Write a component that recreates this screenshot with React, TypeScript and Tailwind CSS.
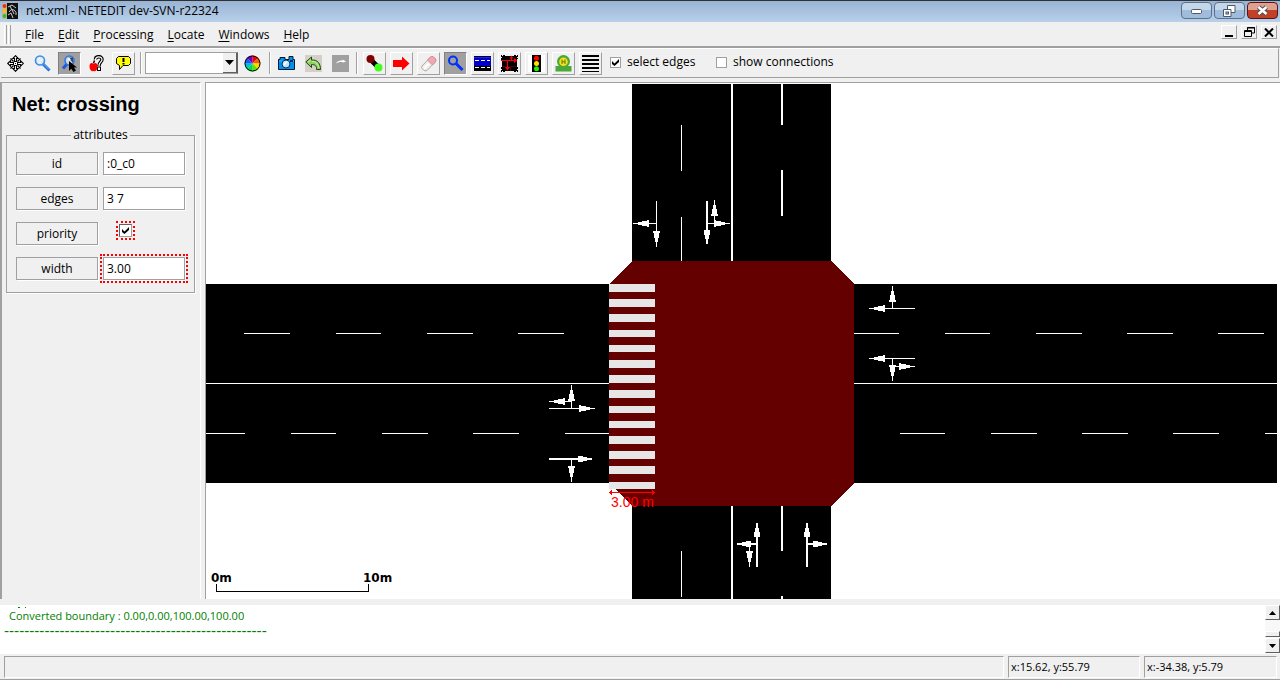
import type { ReactNode } from "react";

const menus = ["File", "Edit", "Processing", "Locate", "Windows", "Help"];

const raised = "border border-t-white border-l-white border-r-[#a0a0a0] border-b-[#a0a0a0] bg-[#f0f0f0]";
const pressed = "border border-t-[#808080] border-l-[#808080] border-r-white border-b-white bg-[#a0a0a0]";
const flat = "border border-transparent";

function Icon({ children, size = 17 }: { children: ReactNode; size?: number }) {
  return (
    <svg width={size} height={size} viewBox={`0 0 ${size} ${size}`} aria-hidden="true">
      {children}
    </svg>
  );
}

const viewTools = [
  {
    label: "Recenter view",
    style: flat,
    icon: (
      <Icon>
        <path d="M3.500 3.500 L6.500 6.500 M13.500 3.500 L10.500 6.500 M3.500 13.500 L6.500 10.500 M13.500 13.500 L10.500 10.500" stroke="#000" strokeWidth="1.200" />
        <g fill="#fff" stroke="#000" strokeWidth="1.100">
          <path d="M8.500 .7 L11.200 3.500 H9.500 V6.500 H7.500 V3.500 H5.800 Z" />
          <path d="M8.500 16.300 L11.200 13.500 H9.500 V10.500 H7.500 V13.500 H5.800 Z" />
          <path d="M.7 8.500 L3.500 5.800 V7.500 H6.500 V9.500 H3.500 V11.200 Z" />
          <path d="M16.300 8.500 L13.500 5.800 V7.500 H10.500 V9.500 H13.500 V11.200 Z" />
        </g>
        <rect x="7" y="7" width="3" height="3" fill="#fff" />
        <rect x="8" y="8" width="1" height="1" fill="#000" />
      </Icon>
    ),
  },
  {
    label: "Edit viewport",
    style: flat,
    icon: (
      <Icon>
        <path d="M9 9 L15.500 15.500" stroke="#2070d8" strokeWidth="3" />
        <path d="M9.500 9 L15 14.500" stroke="#70b8f8" />
        <circle cx="6" cy="5.500" r="4.500" fill="#dcecf8" stroke="#3c8ce8" strokeWidth="1.600" />
        <path d="M4 5 L6 3 M5 7.500 L8.500 4" stroke="#fff" />
      </Icon>
    ),
  },
  {
    label: "Inspect objects",
    style: pressed,
    icon: (
      <Icon>
        <path d="M6 9 L2 13.500" stroke="#1c58e0" strokeWidth="3" />
        <circle cx="8.500" cy="5.500" r="4.500" fill="#d0d8e0" stroke="#2c78e8" strokeWidth="1.600" />
        <path d="M7.500 2.500 H12 V8 Z" fill="#404850" />
        <path d="M8 6 V16 L10.200 13.800 L12.500 17 L15 15.500 L13 12.500 H16 Z" fill="#000" />
        <path d="M7.500 3.500 L9 5" stroke="#fff" strokeWidth="2" />
      </Icon>
    ),
  },
  {
    label: "Locate object",
    style: flat,
    icon: (
      <Icon>
        <path d="M7.500 4.500 C7.500 .8 14 .8 14 4.300 C14 7 11 7 11 11" fill="none" stroke="#000" strokeWidth="3.500" />
        <path d="M7.500 5 C7.500 1 14 1 14 4.500 C14 7 11 7 11 11" fill="none" stroke="#fff" strokeWidth="1.200" />
        <rect x="9.500" y="12" width="3" height="3.500" fill="#fff" stroke="#000" />
        <path d="M5.500 8 L6.500 5.500" stroke="#000" strokeWidth="1.500" />
        <path d="M5.500 8.500 C3 7 1.500 8.500 1.500 11.500 C1.500 15 4 17 5.800 16 C8 17 9.500 14.500 9.500 11.500 C9.500 8.500 8 7 5.500 8.500 Z" fill="#f00" />
      </Icon>
    ),
  },
  {
    label: "Toggle tooltips",
    style: raised,
    icon: (
      <Icon>
        <path d="M3.500 1.500 H13.500 L15.500 3.500 V8.500 L13.500 10.500 H8 L4.500 14.500 V10.500 L1.500 8.500 V3.500 Z" fill="#ff0" stroke="#000" />
        <path d="M8.500 3 V7 M8.500 8 V9.500" stroke="#000" strokeWidth="2" />
      </Icon>
    ),
  },
];

const historyTools = [
  {
    label: "Make snapshot",
    icon: (
      <Icon>
        <path d="M2 2.500 H7 V4.500 H11 V1.500 H15 V4.500 H16.500 V14.500 H.5 V4.500 H2 Z" fill="#0090f0" stroke="#001830" />
        <path d="M1 6 H16" stroke="#40b8ff" />
        <circle cx="8" cy="9" r="4" fill="#b8e4ff" stroke="#003060" />
        <path d="M6 10 L9 6.500" stroke="#fff" strokeWidth="1.500" />
        <rect x="12" y="5" width="3" height="2" fill="#002850" />
      </Icon>
    ),
  },
  {
    label: "Undo",
    icon: (
      <Icon>
        <rect width="17" height="17" fill="#d4d0c8" />
        <path d="M.8 7 L6.500 2 V5 C13 4.500 15.500 9 15.500 14.500 H11.500 C12 11 10 9.500 6.500 9.500 V12.500 Z" fill="#90d060" stroke="#1c4814" />
        <path d="M3 7 L6 4.500 M7 6.500 C11 6.500 13 8.500 14 13" fill="none" stroke="#d0f0b0" />
      </Icon>
    ),
  },
  {
    label: "Redo",
    icon: (
      <Icon>
        <rect width="17" height="17" fill="#a0a0a0" />
        <path d="M4 8.500 C5 6 8 5 10.500 5.500 V4.500 L14 6.500 L11.500 7.500 C8 6.500 6 7.500 4 8.500 Z" fill="#fff" />
      </Icon>
    ),
  },
];

const editModes = [
  {
    label: "Create edge",
    style: raised,
    icon: (
      <Icon>
        <path d="M5 5 L12 12" stroke="#000" strokeWidth="5" />
        <circle cx="4.500" cy="4" r="4" fill="#800000" />
        <circle cx="12.500" cy="12.500" r="4" fill="#40ff20" />
      </Icon>
    ),
  },
  {
    label: "Move",
    style: raised,
    icon: (
      <Icon>
        <path d="M0 5 H9 V1.500 L16.500 8.500 L9 15.500 V12 H0 Z" fill="#f00" />
      </Icon>
    ),
  },
  {
    label: "Delete",
    style: raised,
    icon: (
      <Icon>
        <path d="M2 11 L10.500 2 Q12 .5 13.500 2 L15.500 4 Q16.500 5.500 15.300 7 L7 15.500 Q5 16.500 3.500 15 L2 13.500 Q1 12.500 2 11 Z" fill="#f0ece8" stroke="#b0a8a8" />
        <path d="M7.500 5 L10.500 2 Q12 .5 13.500 2 L15.500 4 Q16.500 5.500 15.300 7 L12.500 10 Z" fill="#f0a8b4" stroke="#d88c98" />
        <path d="M4 13.500 L9 8.500" stroke="#fff" strokeWidth="2" />
      </Icon>
    ),
  },
  {
    label: "Inspect",
    style: pressed,
    icon: (
      <Icon>
        <circle cx="6" cy="5.500" r="4" fill="none" stroke="#0030ff" strokeWidth="2" />
        <path d="M9 8.500 L15.500 15" stroke="#0030ff" strokeWidth="3" />
      </Icon>
    ),
  },
  {
    label: "Select",
    style: raised,
    icon: (
      <Icon>
        <g shapeRendering="crispEdges">
          <rect y="1" width="17" height="15" fill="#000" />
          <rect y="2" width="17" height="9" fill="#0000c8" />
          <rect y="2" width="17" height="1" fill="#2020ff" />
          <path d="M1 5.500 H5 M7 5.500 H11 M13 5.500 H16 M1 12.500 H5 M7 12.500 H11 M13 12.500 H16" stroke="#fff" />
        </g>
      </Icon>
    ),
  },
  {
    label: "Connect",
    style: raised,
    icon: (
      <Icon>
        <g shapeRendering="crispEdges">
          <rect x="1" y="1" width="15" height="15" fill="#000" />
          <path d="M0 5 V.5 H4 M13 .5 H16.500 V4 M0 12 V16.500 H4 M13 16.500 H16.500 V12" fill="none" stroke="#000" strokeDasharray="2 1" />
          <path d="M0 5.500 H15 M6.500 5 V14 M10.500 5 V2" stroke="#f00" fill="none" />
          <path d="M1 11.500 H4 M9 11.500 H16 M9.500 12 V16" stroke="#580000" />
        </g>
        <path d="M13 3 L16.500 5.500 L13 8 Z M4 12 H9 L6.500 15.500 Z M8.500 3.500 L10.500 .5 L12.500 3.500 Z" fill="#f00" />
      </Icon>
    ),
  },
  {
    label: "Traffic lights",
    style: raised,
    icon: (
      <Icon>
        <rect width="17" height="17" fill="#fff" />
        <rect x="4" width="9" height="17" fill="#000" />
        <circle cx="8.500" cy="3.200" r="2.500" fill="#f00" />
        <circle cx="8.500" cy="8.500" r="2.500" fill="#ffe000" />
        <circle cx="8.500" cy="13.800" r="2.500" fill="#20f000" />
      </Icon>
    ),
  },
  {
    label: "Additionals",
    style: raised,
    icon: (
      <Icon>
        <path d="M.5 11 H4 Q2 9 2 6.500 A6.500 6.500 0 0 1 15 6.500 Q15 9 13 11 H16.500 V16.500 H.5 Z" fill="#48a838" />
        <circle cx="8.500" cy="6.800" r="4.300" fill="#f8e020" />
        <path d="M7 4.500 V9 M10 4.500 V9 M7 6.800 H10" stroke="#58780c" />
      </Icon>
    ),
  },
  {
    label: "Crossings",
    style: raised,
    icon: (
      <Icon>
        <path d="M0 1 H17 M0 5 H17 M0 9 H17 M0 13 H17 M0 16.500 H17" stroke="#000" strokeWidth="2" shapeRendering="crispEdges" />
      </Icon>
    ),
  },
];

const wheel = ["#f80000", "#f06000", "#f8d800", "#60e000", "#00d848", "#00c0d0", "#1060f8", "#7000c0"];

function ColorWheel() {
  return (
    <Icon>
      {wheel.map((color, i) => {
        const a = (i * Math.PI) / 4 - Math.PI / 2;
        const b = a + Math.PI / 4;
        return (
          <path
            key={color}
            fill={color}
            d={`M8.500 8.500 L${8.5 + 8 * Math.cos(a)} ${8.5 + 8 * Math.sin(a)} A8 8 0 0 1 ${8.5 + 8 * Math.cos(b)} ${8.5 + 8 * Math.sin(b)} Z`}
          />
        );
      })}
      <circle cx="8.500" cy="8.500" r="7.500" fill="none" stroke="#000" />
    </Icon>
  );
}

function ToolButton({ label, style, children }: { label: string; style: string; children: ReactNode }) {
  return (
    <button type="button" aria-label={label} className={`flex h-[23px] w-[23px] shrink-0 items-center justify-center ${style}`}>
      {children}
    </button>
  );
}

function Separator() {
  return <div className="h-[22px] w-[2px] shrink-0 border-l border-l-[#a0a0a0] bg-white" />;
}

function Checkbox({ id, checked, className = "" }: { id: string; checked: boolean; className?: string }) {
  return (
    <span className="grid shrink-0">
      <input
        id={id}
        type="checkbox"
        defaultChecked={checked}
        className={`peer col-start-1 row-start-1 appearance-none border border-[#a0a0a0] bg-white ${className}`}
      />
      <svg
        className="pointer-events-none invisible col-start-1 row-start-1 place-self-center peer-checked:visible"
        width="7"
        height="7"
        viewBox="0 0 7 7"
      >
        <path d="M0 2 L2.500 4.500 L7 0 V3 L2.500 7 L0 5 Z" fill="#000" />
      </svg>
    </span>
  );
}

function TitleBar() {
  const frame = "flex h-[17px] w-[31px] items-center justify-center rounded-sm border border-[#5c708c]";
  return (
    <header className="flex h-[22px] items-center border-t border-[#303030] bg-linear-to-b from-[#98b4d4] to-[#b8d0ea] pr-[2px] pb-[2px]">
      <svg className="ml-[2px]" width="16" height="16" viewBox="0 0 16 16" aria-hidden="true">
        <rect x="5" width="11" height="16" fill="#101010" />
        <path d="M6 4 L10 2 L14 5 M7 9 Q9 5 12 7 T14 12 M6 12 L9 10 L11 15 M8 3 L12 11" fill="none" stroke="#c8c8c8" />
        <rect width="5" height="16" fill="#b8b8a8" />
        <circle cx="2.500" cy="3" r="2" fill="#f03010" />
        <circle cx="2.500" cy="8" r="2" fill="#f8c000" />
        <circle cx="2.500" cy="13" r="2" fill="#40b820" />
      </svg>
      <h1 className="ml-2 flex-1 text-[12px] leading-[18px]">net.xml - NETEDIT dev-SVN-r22324</h1>
      <div className="flex gap-[2px]">
        <button type="button" aria-label="Minimize" className={`${frame} bg-linear-to-b from-[#c4d6ea] from-50% to-[#a0bcdc] to-50%`}>
          <svg width="12" height="6" viewBox="0 0 12 6">
            <rect x=".5" y="1.500" width="10" height="4" rx="1" fill="#fff" stroke="#505868" />
          </svg>
        </button>
        <button type="button" aria-label="Restore" className={`${frame} bg-linear-to-b from-[#c4d6ea] from-50% to-[#a0bcdc] to-50%`}>
          <svg width="13" height="12" viewBox="0 0 13 12">
            <path d="M4.500 .5 H12 V7.500 H4.500 Z" fill="#fff" stroke="#505868" />
            <path d="M.5 4.500 H8 V11.500 H.5 Z" fill="#fff" stroke="#505868" />
            <rect x="3" y="7" width="2.500" height="2" fill="#a0bcdc" stroke="#505868" />
          </svg>
        </button>
        <button
          type="button"
          aria-label="Close"
          className="flex h-[17px] w-[31px] items-center justify-center rounded-sm border border-[#581418] bg-linear-to-b from-[#e0a090] from-50% to-[#c04028] to-50%"
        >
          <svg width="13" height="11" viewBox="0 0 13 11">
            <path d="M2.500 2 L10.500 9 M10.500 2 L2.500 9" stroke="#505058" strokeWidth="4.500" />
            <path d="M2.500 2 L10.500 9 M10.500 2 L2.500 9" stroke="#fff" strokeWidth="2.500" />
          </svg>
        </button>
      </div>
    </header>
  );
}

function MenuBar() {
  const box = `flex h-[14px] w-4 items-center justify-center ${raised}`;
  return (
    <nav className="flex h-[26px] items-center border-b-2 border-[#a0a0a0] pr-[3px] pl-1">
      <div className="flex gap-[1px] pr-[7px]">
        <div className="h-[19px] w-[3px] border-r border-l border-r-[#a0a0a0] border-l-white" />
        <div className="h-[19px] w-[3px] border-r border-l border-r-[#a0a0a0] border-l-white" />
      </div>
      <div className="flex flex-1 pt-[2px]">
        {menus.map((menu) => (
          <button key={menu} type="button" className="px-[7px] text-[12px] leading-[18px]">
            <span className="underline underline-offset-2">{menu[0]}</span>
            {menu.slice(1)}
          </button>
        ))}
      </div>
      <div className="flex gap-[4px] pb-1">
        <button type="button" aria-label="Minimize document" className={box}>
          <svg width="10" height="9" viewBox="0 0 10 9">
            <path d="M1 8 H9" stroke="#000" strokeWidth="2" />
          </svg>
        </button>
        <button type="button" aria-label="Restore document" className={box}>
          <svg width="11" height="10" viewBox="0 0 11 10" fill="none" stroke="#000">
            <path d="M3.500 3 V.5 H10.500 V6 H8 M3 1 H11 M.5 3.500 H7.500 V9.500 H.5 Z M0 4.500 H8" />
          </svg>
        </button>
        <button type="button" aria-label="Close document" className={box}>
          <svg width="10" height="9" viewBox="0 0 10 9">
            <path d="M1 .5 L9 8.500 M9 .5 L1 8.500" stroke="#000" strokeWidth="2" />
          </svg>
        </button>
      </div>
    </nav>
  );
}

function ToolBar() {
  return (
    <div className="mx-[1px] flex h-[30px] items-center border-t border-r border-b border-t-white border-r-[#a0a0a0] border-b-[#a0a0a0] pl-[3px]">
      <div className="flex gap-1">
        {viewTools.map((tool) => (
          <ToolButton key={tool.label} label={tool.label} style={tool.style}>
            {tool.icon}
          </ToolButton>
        ))}
      </div>
      <div className="flex items-center gap-[3px] pl-[5px]">
        <Separator />
        <div className="grid h-[22px] w-[93px] border border-t-[#a0a0a0] border-l-[#a0a0a0] border-r-[#606060] border-b-[#a0a0a0] bg-white">
          <select aria-label="Color scheme" className="col-start-1 row-start-1 appearance-none bg-white text-[12px]">
            <option></option>
          </select>
          <span className="pointer-events-none col-start-1 row-start-1 flex w-[14px] items-center justify-center justify-self-end border-r border-b border-[#606060] bg-[#f0f0f0]">
            <svg width="9" height="5" viewBox="0 0 9 5">
              <path d="M0 0 H9 L4.500 5 Z" />
            </svg>
          </span>
        </div>
        <ToolButton label="Edit coloring" style={flat}>
          <ColorWheel />
        </ToolButton>
      </div>
      <div className="flex items-center gap-1 px-[5px]">
        <Separator />
        {historyTools.map((tool) => (
          <ToolButton key={tool.label} label={tool.label} style={flat}>
            {tool.icon}
          </ToolButton>
        ))}
        <Separator />
      </div>
      <div className="flex items-center gap-1">
        {editModes.map((tool) => (
          <ToolButton key={tool.label} label={tool.label} style={tool.style}>
            {tool.icon}
          </ToolButton>
        ))}
      </div>
      <div className="flex items-center pb-[2px] pl-[8px] text-[12px] leading-[16px]">
        <Checkbox id="select-edges" checked className="h-[11px] w-[11px]" />
        <label htmlFor="select-edges" className="w-[95px] pl-[6px]">
          select edges
        </label>
        <Checkbox id="show-connections" checked={false} className="h-[11px] w-[11px]" />
        <label htmlFor="show-connections" className="pl-[6px]">
          show connections
        </label>
      </div>
    </div>
  );
}

const attrButton = "h-[23px] w-[82px] border border-[#a0a0a0] shadow-[1px_1px_0_#fff]";
const attrInput = "h-[23px] w-[82px] border border-[#a0a0a0] bg-white px-[3px] shadow-[1px_1px_0_#fff]";
const modified = "outline-2 outline-offset-1 outline-dotted outline-[#f00]";

function AttributePanel() {
  return (
    <aside className="w-[201px] shrink-0 border-t border-r border-l-2 border-t-[#a0a0a0] border-r-white border-l-[#a0a0a0] pr-[5px] pl-[4px]">
      <h2 className="pt-[9px] pl-[6px] font-['Liberation_Sans',sans-serif] text-[20px] leading-[24px] font-bold">Net: crossing</h2>
      <fieldset className="mt-[10px] border border-[#a0a0a0] px-[9px] pb-[12px] text-[12px] leading-[18px] shadow-[1px_1px_0_#fff]">
        <legend className="mx-auto px-[2px]">attributes</legend>
        <div className="grid grid-cols-[82px_82px] gap-x-[5px] gap-y-3 pt-[8px]">
          <button type="button" className={attrButton}>id</button>
          <input aria-label="id" defaultValue=":0_c0" className={attrInput} />
          <button type="button" className={attrButton}>edges</button>
          <input aria-label="edges" defaultValue="3 7" className={attrInput} />
          <button type="button" className={attrButton}>
            <label htmlFor="priority">priority</label>
          </button>
          <div className="flex items-start pt-[2px] pl-[16px]">
            <Checkbox id="priority" checked className={`h-[13px] w-[13px] border-t-[#606060] border-l-[#606060] ${modified}`} />
          </div>
          <button type="button" className={attrButton}>width</button>
          <input aria-label="width" defaultValue="3.00" className={`${attrInput} ${modified}`} />
        </div>
      </fieldset>
    </aside>
  );
}

// [x1, y1, x2, y2, thickness]; the head sits at x2, y2
const arrows: number[][] = [
  [656.5, 201, 656.5, 247, 1],
  [656.5, 223.5, 633, 223.5, 1],
  [707, 201, 707, 246, 2],
  [707, 223.5, 730, 223.5, 1],
  [714.5, 223, 714.5, 200, 1],
  [757, 567, 757, 521, 2],
  [757, 544, 735, 544, 2],
  [749.5, 544, 749.5, 567, 1],
  [807, 567, 807, 521, 2],
  [807, 544, 829, 544, 2],
  [549, 408.5, 595, 408.5, 1],
  [571.5, 408, 571.5, 385, 1],
  [571.5, 401.5, 549, 401.5, 1],
  [549, 459, 594, 459, 2],
  [571.5, 459, 571.5, 482, 1],
  [915, 308.5, 869, 308.5, 1],
  [892.5, 308, 892.5, 286, 1],
  [915, 358.5, 869, 358.5, 1],
  [892.5, 358, 892.5, 381, 1],
  [892, 366.5, 915, 366.5, 1],
];

const upperDashes = [[244, 290], [336, 381], [427, 473], [518, 564], [854, 899], [945, 990], [1036, 1082], [1127, 1173], [1218, 1264]];
const lowerDashes = [[206, 245], [291, 336], [382, 428], [473, 519], [565, 609], [900, 945], [991, 1037], [1082, 1128], [1173, 1219], [1265, 1277]];

function Arrow({ x1, y1, x2, y2, w }: { x1: number; y1: number; x2: number; y2: number; w: number }) {
  const dx = Math.sign(x2 - x1);
  const dy = Math.sign(y2 - y1);
  const bx = x2 - dx * 16;
  const by = y2 - dy * 16;
  return (
    <g>
      <line x1={x1} y1={y1} x2={x2 - dx * 2} y2={y2 - dy * 2} stroke="#fff" strokeWidth={w} />
      <polygon points={`${x2},${y2} ${bx + dy * 3.5},${by + dx * 3.5} ${bx - dy * 3.5},${by - dx * 3.5}`} fill="#fff" />
    </g>
  );
}

function NetworkView() {
  return (
    <svg className="h-full w-full" viewBox="206 84 1071 515" preserveAspectRatio="xMidYMid slice" shapeRendering="crispEdges">
      <rect x="206" y="284" width="1071" height="199" fill="#000" />
      <rect x="632" y="84" width="199" height="515" fill="#000" />
      <polygon points="632,261 831,261 854,284 854,483 831,506 632,506 609,483 609,284" fill="#640000" />

      <g stroke="#fff">
        <path d="M206 383.500 H609 M854 383.500 H1277" />
        <path d={upperDashes.map(([a, b]) => `M${a} 333.500 H${b}`).join(" ")} />
        <path d={lowerDashes.map(([a, b]) => `M${a} 433.500 H${b}`).join(" ")} />
        <path d="M681.500 125 V171 M681.500 217 V261 M681.500 551 V597" />
        <path d="M732 84 V261 M732 506 V599 M782 84 V125 M782 170 V216 M782 506 V551 M782 596 V599" strokeWidth="2" />
      </g>

      {arrows.map(([x1, y1, x2, y2, w], i) => (
        <Arrow key={i} x1={x1} y1={y1} x2={x2} y2={y2} w={w} />
      ))}

      {Array.from({ length: 14 }, (_, i) => {
        const top = Math.round(284 + i * 15.2);
        const bottom = Math.round(291.6 + i * 15.2);
        return <rect key={i} x="609" y={top} width="46" height={bottom - top} fill="#e6e6e6" />;
      })}

      <path d="M610 492.500 H654" stroke="#f00" />
      <path d="M609 492.500 L612 490 V495 Z M655 492.500 L652 490 V495 Z" fill="#f00" />
      <text x="611" y="507" fill="#f00" className="font-['Liberation_Sans',sans-serif] text-[14px]">3.00 m</text>

      <path d="M216.500 584 V591.500 H368.500 V584" fill="none" stroke="#000" />
      <text x="211" y="582" className="font-['DejaVu_Sans',sans-serif] text-[12px] font-bold">0m</text>
      <text x="363" y="582" className="font-['DejaVu_Sans',sans-serif] text-[12px] font-bold">10m</text>
    </svg>
  );
}

function MessageLog() {
  const arrowButton = "flex h-[15px] w-[15px] items-center justify-center border border-t-white border-l-white border-r-[#606060] border-b-[#606060] bg-[#f0f0f0]";
  return (
    <section className="flex h-[49px] bg-white">
      <div className="flex-1 overflow-hidden pl-1 text-[#008000]">
        <svg className="ml-[14px]" width="8" height="3" viewBox="0 0 8 3" aria-hidden="true">
          <path d="M0 2.500 H2 M7 2.500 H8" stroke="#008000" />
        </svg>
        <p className="pl-[5px] text-[11px] leading-[16px]">Converted boundary : 0.00,0.00,100.00,100.00</p>
        <p className="font-['DejaVu_Sans',sans-serif] text-[14px] leading-[14px]">{"-".repeat(52)}</p>
      </div>
      <div className="flex w-[15px] flex-col justify-between bg-[#f8f8f8] pb-[1px]">
        <button type="button" aria-label="Scroll up" className={arrowButton}>
          <svg width="7" height="4" viewBox="0 0 7 4">
            <path d="M0 4 H7 L3.500 0 Z" />
          </svg>
        </button>
        <div>
          <div className="mb-[1px] h-[6px] border border-t-white border-l-white border-r-[#606060] border-b-[#606060] bg-[#f0f0f0]" />
          <button type="button" aria-label="Scroll down" className={arrowButton}>
            <svg width="7" height="4" viewBox="0 0 7 4">
              <path d="M0 0 H7 L3.500 4 Z" />
            </svg>
          </button>
        </div>
      </div>
    </section>
  );
}

function StatusBar() {
  const field = "h-[22px] border border-t-[#a0a0a0] border-l-[#a0a0a0] border-r-white border-b-white px-[2px] text-[11px] leading-[20px]";
  return (
    <footer className="flex h-[26px] gap-1 border-b border-[#a0a0a0] pt-[2px] pr-[3px] pl-1">
      <div className={`flex-1 ${field}`} />
      <div className={`w-[132px] ${field}`}>x:15.62, y:55.79</div>
      <div className={`w-[133px] ${field}`}>x:-34.38, y:5.79</div>
    </footer>
  );
}

export default function App() {
  return (
    <div className="flex h-screen flex-col bg-[#f0f0f0] font-['Open_Sans',sans-serif] text-black">
      <TitleBar />
      <MenuBar />
      <ToolBar />
      <main className="mt-1 mb-[6px] flex min-h-0 flex-1 gap-[4px]">
        <AttributePanel />
        <div className="min-w-0 flex-1 border-t border-l border-[#a0a0a0] bg-white pt-[1px] pr-[3px]">
          <NetworkView />
        </div>
      </main>
      <MessageLog />
      <StatusBar />
    </div>
  );
}
